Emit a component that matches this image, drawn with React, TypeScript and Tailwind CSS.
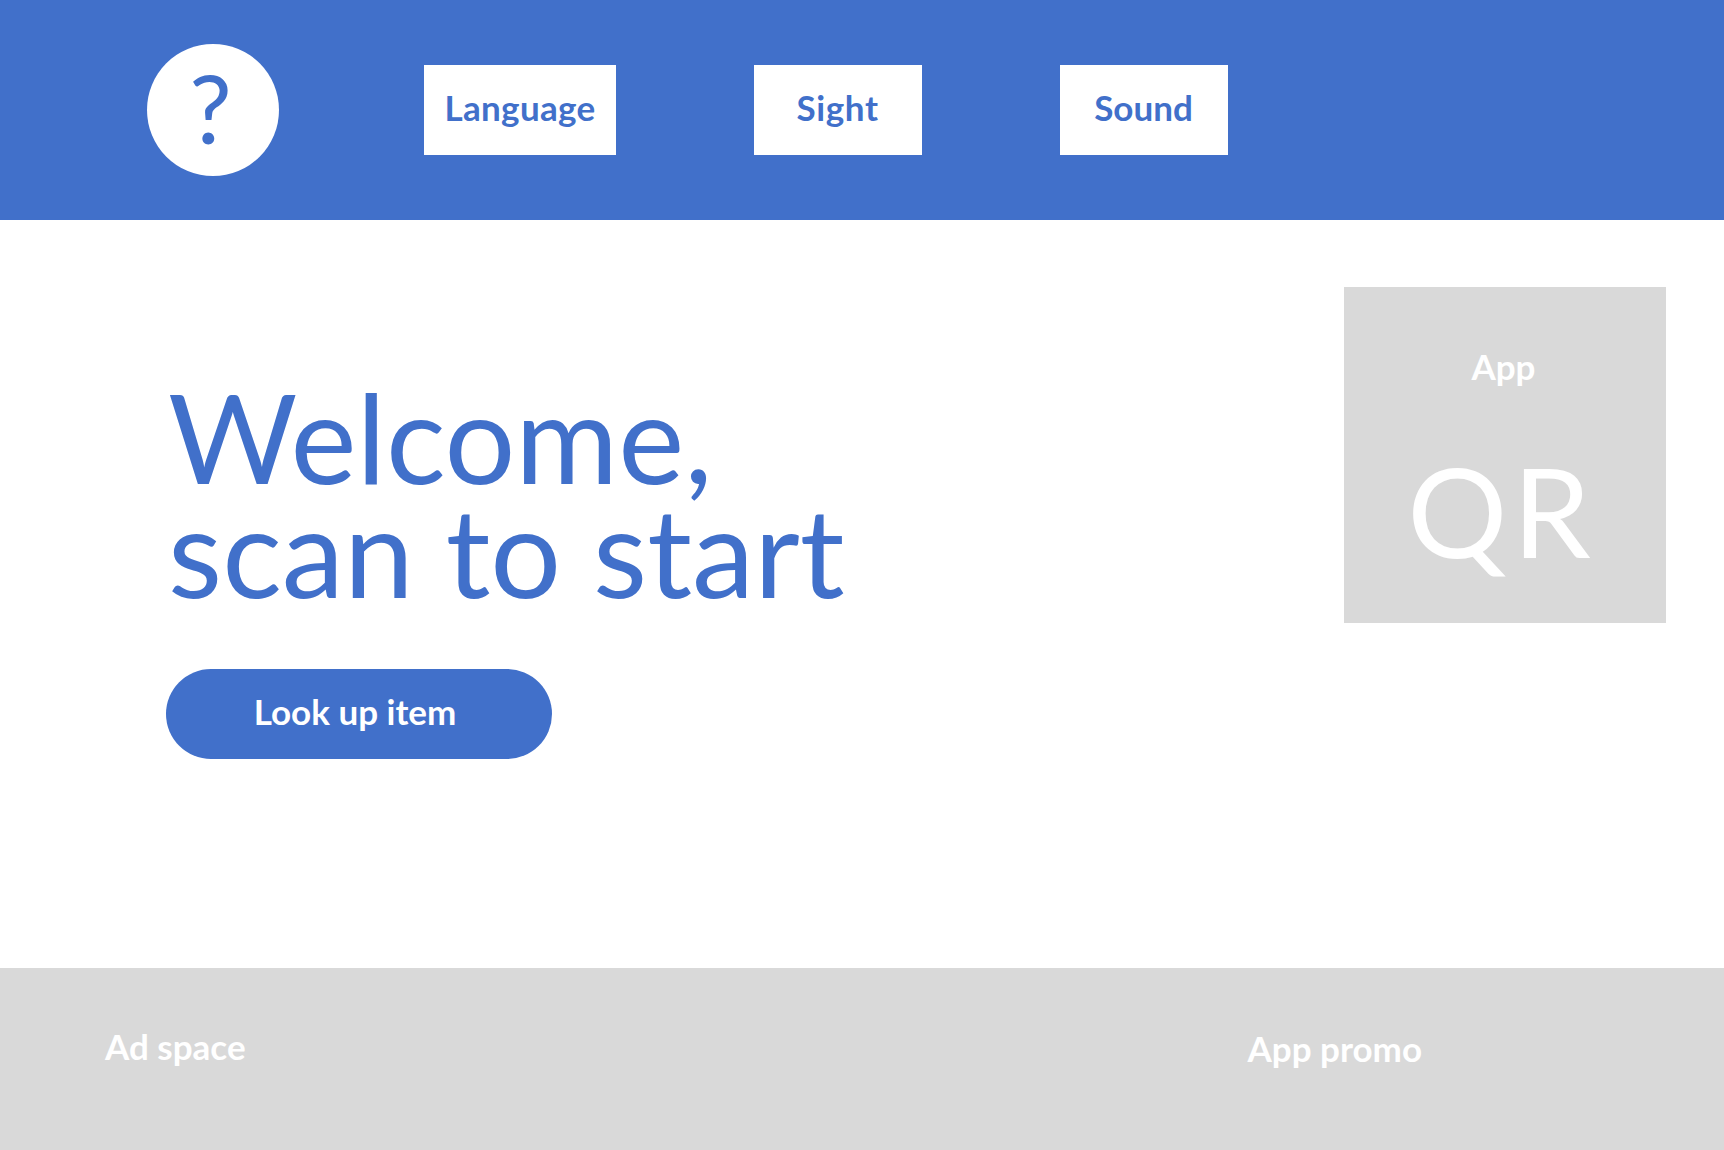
import clsx from 'clsx';
import type { ReactNode } from 'react';

interface SettingButtonProps {
  className?: string;
  children: ReactNode;
}

function SettingButton({ className, children }: SettingButtonProps) {
  return (
    <button
      className={clsx(
        'flex h-[90px] shrink-0 items-center justify-center bg-white pb-[5px] text-[35px] leading-none font-bold text-[#4170ca]',
        className
      )}
    >
      {children}
    </button>
  );
}

function Header() {
  return (
    <header className="flex h-[220px] items-center bg-[#4170ca] pl-[147px]">
      <button className="flex size-[132px] shrink-0 items-center justify-center rounded-full bg-white pr-[5px] pb-1.5 text-[95px] leading-none text-[#4170ca]">
        ?
      </button>

      <nav className="ml-[145px] flex gap-[138px]">
        <SettingButton className="w-[192px] tracking-[0.3px]">
          Language
        </SettingButton>
        <SettingButton className="w-[168px] pr-[1px] tracking-[0.6px]">
          Sight
        </SettingButton>
        <SettingButton className="w-[168px] pr-[1px]">Sound</SettingButton>
      </nav>
    </header>
  );
}

function AppQrCard() {
  return (
    <aside className="mt-[67px] flex h-[336px] w-[322px] shrink-0 flex-col items-center bg-[#d9d9d9] text-white">
      <p className="mt-[62px] pr-[3px] text-[35px] leading-[35px] font-bold">
        App
      </p>
      <p className="mt-[64px] pr-[7px] text-[125px] leading-[125px] tracking-[5px]">
        QR
      </p>
    </aside>
  );
}

export default function App() {
  return (
    <div className="flex h-[1150px] flex-col bg-white font-['Lato',sans-serif]">
      <Header />

      <main className="flex flex-1 justify-between pr-[58px] pl-[166px]">
        <div>
          <h1 className="mt-[159px] pl-[2px] text-[125px] leading-[114px] whitespace-nowrap text-[#4170ca]">
            Welcome,
            <br />
            scan to start
          </h1>

          <button className="mt-[62px] flex h-[90px] w-[386px] items-center justify-center rounded-full bg-[#4170ca] pr-2 pb-[5px] text-[35px] leading-none font-bold text-white">
            Look up item
          </button>
        </div>

        <AppQrCard />
      </main>

      <footer className="flex h-[182px] justify-between bg-[#d9d9d9] pr-[302px] pl-[105px] text-[35px] leading-[35px] font-bold text-white">
        <p className="mt-[61px]">Ad space</p>
        <p className="mt-[63px]">App promo</p>
      </footer>
    </div>
  );
}
